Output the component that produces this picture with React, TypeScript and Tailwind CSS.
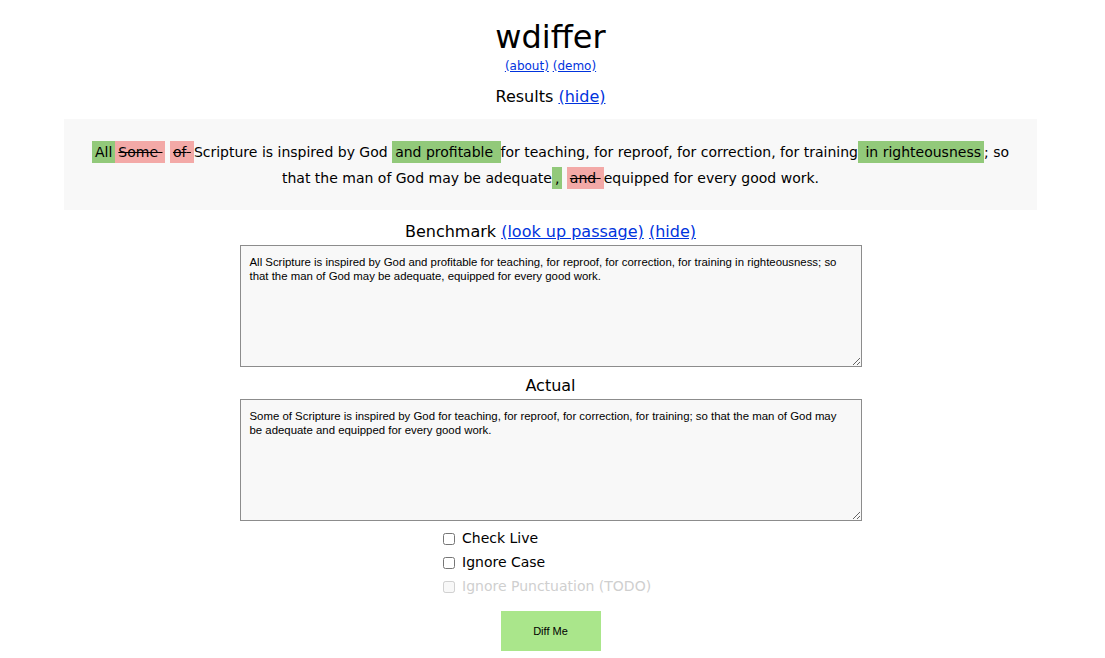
const BENCHMARK =
  "All Scripture is inspired by God and profitable for teaching, for reproof, for correction, for training in righteousness; so that the man of God may be adequate, equipped for every good work.";
const ACTUAL =
  "Some of Scripture is inspired by God for teaching, for reproof, for correction, for training; so that the man of God may be adequate and equipped for every good work.";

function Ins({ children }: { children: React.ReactNode }) {
  return <span className="bg-[#92c97a] px-[3px] py-[3px]">{children}</span>;
}

function Del({ children }: { children: React.ReactNode }) {
  return <span className="bg-[#f3a9a7] px-[3px] py-[3px] line-through">{children}</span>;
}

function Link({ children }: { children: React.ReactNode }) {
  return <a href="#" className="text-[#0033dd] underline">{children}</a>;
}

function Box({ value }: { value: string }) {
  return (
    <textarea
      readOnly
      value={value}
      className="block mx-auto w-[622px] h-[122px] border border-[#8c8c8c] bg-[#f8f8f8] px-[9px] py-[9px] text-[11.4px] leading-[14px] text-black resize-y outline-none font-['Liberation_Sans',Arial,sans-serif]"
    />
  );
}

function Check({ label, disabled }: { label: string; disabled?: boolean }) {
  return (
    <label className={`flex items-center h-6 ${disabled ? "text-[#cfcfcf]" : "text-black"}`}>
      <input type="checkbox" disabled={disabled} className="w-[12px] h-[12px] mr-[7px] mt-[1px]" />
      {label}
    </label>
  );
}

export default function App() {
  return (
    <div className="w-[1101px] min-h-screen bg-white text-black text-base font-['DejaVu_Sans',Verdana,sans-serif]">
      <div className="text-center pt-[16px]">
        <h1 className="text-[32px] leading-[42px]">wdiffer</h1>
        <div className="text-[12px] leading-[14px] mt-[1px]">
          <Link>(about)</Link> <Link>(demo)</Link>
        </div>
        <div className="mt-[14px] leading-[20px]">
          Results <Link>(hide)</Link>
        </div>
      </div>

      <div className="mx-16 mt-[12px] bg-[#f8f8f8] pt-[20px] pb-[19px] px-6 text-center text-[14px] leading-[26px]">
        <Ins>All</Ins><Del>Some{"\u00a0"}</Del> <Del>of{"\u00a0"}</Del>Scripture is inspired by God <Ins>and profitable{"\u00a0"}</Ins>for teaching, for reproof, for correction, for training<Ins>{"\u00a0"}in righteousness</Ins>; so that the man of God may be adequate<Ins>,</Ins> <Del>and{"\u00a0"}</Del>equipped for every good work.
      </div>

      <div className="text-center mt-[12px] leading-[20px]">
        Benchmark <Link>(look up passage)</Link> <Link>(hide)</Link>
      </div>
      <div className="mt-[3px]">
        <Box value={BENCHMARK} />
      </div>

      <div className="text-center mt-[9px] leading-[20px]">Actual</div>
      <div className="mt-[3px]">
        <Box value={ACTUAL} />
      </div>

      <div className="flex justify-center mt-[5px]">
        <div className="text-[14px] w-[215px]">
          <Check label="Check Live" />
          <Check label="Ignore Case" />
          <Check label="Ignore Punctuation (TODO)" disabled />
        </div>
      </div>

      <div className="flex justify-center mt-[13px]">
        <button className="w-[100px] h-10 bg-[#aae68b] text-[11px] font-['Liberation_Sans',Arial,sans-serif]">
          Diff Me
        </button>
      </div>
    </div>
  );
}
